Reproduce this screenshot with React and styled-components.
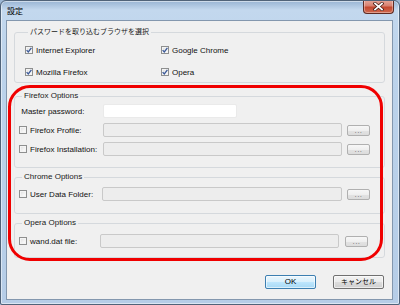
import React from "react";
import styled, { createGlobalStyle } from "styled-components";

const GlobalStyle = createGlobalStyle`
  html, body {
    margin: 0;
    padding: 0;
    background: #9db7d4;
  }
  body {
    font-family: "Liberation Sans", "Noto Sans CJK JP", sans-serif;
  }
`;

const Window = styled.div`
  width: 400px;
  height: 305px;
  box-sizing: border-box;
  display: flex;
  flex-direction: column;
  border: 1px solid #506379;
  border-radius: 6px 6px 2px 2px;
  background: linear-gradient(
    180deg,
    #98b4d3 0px,
    #c3d8ee 9px,
    #bcd3eb 60px,
    #b6cde7 100%
  );
  box-shadow: inset 0 0 0 1px rgba(255, 255, 255, 0.5);
  overflow: hidden;
`;

const TitleBar = styled.div`
  height: 19px;
  display: flex;
  align-items: flex-start;
  padding-left: 6px;
  flex-shrink: 0;
`;

const Title = styled.div`
  font-family: "Noto Sans CJK JP", sans-serif;
  font-size: 8px;
  line-height: 19px;
  color: #000;
`;

const CloseButton = styled.div`
  margin-left: auto;
  margin-right: 5px;
  margin-top: -1px;
  width: 31px;
  height: 14px;
  box-sizing: border-box;
  border: 1px solid #5e2a22;
  border-top: none;
  border-radius: 0 0 4px 4px;
  background: linear-gradient(
    180deg,
    #e7a99c 0%,
    #d8806f 45%,
    #c5482f 55%,
    #cf6a4f 100%
  );
  display: flex;
  align-items: center;
  justify-content: center;
  box-shadow: inset 0 0 0 1px rgba(255, 255, 255, 0.35);
`;

const Client = styled.div`
  position: relative;
  flex: 1;
  margin: 0 6px 4px 5px;
  border: 1px solid #8397ae;
  background: #f0f0f0;
  padding: 6px 7px 0 7px;
  display: flex;
  flex-direction: column;
`;

const Group = styled.fieldset`
  margin: 0 0 ${(p) => p.$after || 0}px 0;
  padding: ${(p) => p.$pad};
  border: 1px solid #d5d9dd;
  border-radius: 3px;
  min-width: 0;
`;

const Legend = styled.legend`
  margin-left: 3px;
  padding: 0 2px;
  font-size: ${(p) => (p.$cjk ? 7 : 8)}px;
  line-height: 10px;
  color: #1a1a1a;
`;

const BrowserGrid = styled.div`
  display: grid;
  grid-template-columns: 136px 1fr;
  row-gap: 10px;
`;

const CheckLabel = styled.label`
  display: flex;
  align-items: center;
  gap: 3px;
  height: 12px;
  font-size: 8px;
  color: #111;
  white-space: nowrap;
`;

const Box = styled.span`
  width: 8px;
  height: 8px;
  box-sizing: border-box;
  border: 1px solid #8e8f8f;
  background: linear-gradient(135deg, #dcdcdc 0%, #f4f4f4 60%, #ffffff 100%);
  box-shadow: inset 0 0 0 1px #f4f4f4;
  display: inline-flex;
  align-items: center;
  justify-content: center;
  flex-shrink: 0;
`;

const Rows = styled.div`
  display: flex;
  flex-direction: column;
  gap: 5px;
`;

const FieldRow = styled.div`
  display: grid;
  grid-template-columns: ${(p) => p.$label}px 1fr 23px;
  column-gap: ${(p) => p.$gap || 5}px;
  align-items: center;
  height: 14px;
`;

const PlainRow = styled.div`
  display: flex;
  align-items: center;
  height: 14px;
`;

const Label = styled.span`
  font-size: 8px;
  color: #111;
  white-space: nowrap;
  width: ${(p) => p.$w}px;
`;

const TextBox = styled.div`
  height: 14px;
  box-sizing: border-box;
  border-radius: 2px;
  border: 1px solid ${(p) => (p.$enabled ? "#eaeaea" : "#c9c9c9")};
  background: ${(p) => (p.$enabled ? "#ffffff" : "#ededed")};
  width: ${(p) => (p.$w ? `${p.$w}px` : "auto")};
`;

const Browse = styled.div`
  height: 11px;
  box-sizing: border-box;
  border: 1px solid #b0b0b0;
  border-radius: 2px;
  background: linear-gradient(180deg, #f7f7f7 0%, #efefef 50%, #e3e3e3 51%, #dcdcdc 100%);
  font-size: 8px;
  line-height: 9px;
  color: #6f6f6f;
  text-align: center;
  letter-spacing: 0.5px;
`;

const ButtonBar = styled.div`
  display: flex;
  justify-content: flex-end;
  gap: 17px;
  margin-top: 17px;
  padding-right: 1px;
`;

const DialogButton = styled.div`
  width: 51px;
  height: 14px;
  box-sizing: border-box;
  border-radius: 2px;
  border: 1px solid ${(p) => (p.$primary ? "#3c7fb1" : "#707070")};
  background: ${(p) =>
    p.$primary
      ? "linear-gradient(180deg, #eaf6fd 0%, #d9f0fc 50%, #bee6fd 51%, #a7d9f5 100%)"
      : "linear-gradient(180deg, #f2f2f2 0%, #ebebeb 50%, #dddddd 51%, #cfcfcf 100%)"};
  box-shadow: inset 0 0 0 1px rgba(255, 255, 255, 0.6);
  font-family: "Liberation Sans", "Noto Sans CJK JP", sans-serif;
  font-size: ${(p) => (p.$cjk ? 7 : 8)}px;
  line-height: 12px;
  text-align: center;
  color: #000;
`;

const Highlight = styled.div`
  position: absolute;
  left: 1px;
  top: 64px;
  width: 375px;
  height: 176px;
  box-sizing: border-box;
  border: 3px solid #f00000;
  border-radius: 22px;
  pointer-events: none;
`;

const CheckBox = ({ checked }) => (
  <Box>
    {checked && (
      <svg width="6" height="6" viewBox="0 0 6 6">
        <path d="M0.6 3.1 L2.3 4.9 L5.4 0.8" fill="none" stroke="#3b5998" strokeWidth="1.3" />
      </svg>
    )}
  </Box>
);

const OptionRow = ({ text, label, gap }) => (
  <FieldRow $label={label} $gap={gap}>
    <CheckLabel>
      <CheckBox />
      {text}
    </CheckLabel>
    <TextBox />
    <Browse>...</Browse>
  </FieldRow>
);

export default function App() {
  return (
    <>
      <GlobalStyle />
      <Window>
        <TitleBar>
          <Title>設定</Title>
          <CloseButton>
            <svg width="11" height="9" viewBox="0 0 11 9">
              <path d="M2 1.5 L9 7.5 M9 1.5 L2 7.5" stroke="#4a1d16" strokeWidth="3.2" strokeLinecap="square" />
              <path d="M2 1.5 L9 7.5 M9 1.5 L2 7.5" stroke="#ffffff" strokeWidth="1.7" strokeLinecap="square" />
            </svg>
          </CloseButton>
        </TitleBar>
        <Client>
          <Group $pad="7px 0 4px 10px" $after={8}>
            <Legend $cjk>パスワードを取り込むブラウザを選択</Legend>
            <BrowserGrid>
              <CheckLabel>
                <CheckBox checked />
                Internet Explorer
              </CheckLabel>
              <CheckLabel>
                <CheckBox checked />
                Google Chrome
              </CheckLabel>
              <CheckLabel>
                <CheckBox checked />
                Mozilla Firefox
              </CheckLabel>
              <CheckLabel>
                <CheckBox checked />
                Opera
              </CheckLabel>
            </BrowserGrid>
          </Group>

          <Group $pad="3px 14px 11px 4px" $after={4}>
            <Legend>Firefox Options</Legend>
            <Rows>
              <PlainRow>
                <Label $w={84}>&nbsp;Master password:</Label>
                <TextBox $enabled $w={134} />
              </PlainRow>
              <OptionRow text="Firefox Profile:" label={79} />
              <OptionRow text="Firefox Installation:" label={79} />
            </Rows>
          </Group>

          <Group $pad="5px 14px 12px 4px" $after={4}>
            <Legend>Chrome Options</Legend>
            <OptionRow text="User Data Folder:" label={78} />
          </Group>

          <Group $pad="6px 16px 9px 4px">
            <Legend>Opera Options</Legend>
            <OptionRow text="wand.dat file:" label={75} gap={6} />
          </Group>

          <ButtonBar>
            <DialogButton $primary>OK</DialogButton>
            <DialogButton $cjk>キャンセル</DialogButton>
          </ButtonBar>

          <Highlight />
        </Client>
      </Window>
    </>
  );
}
